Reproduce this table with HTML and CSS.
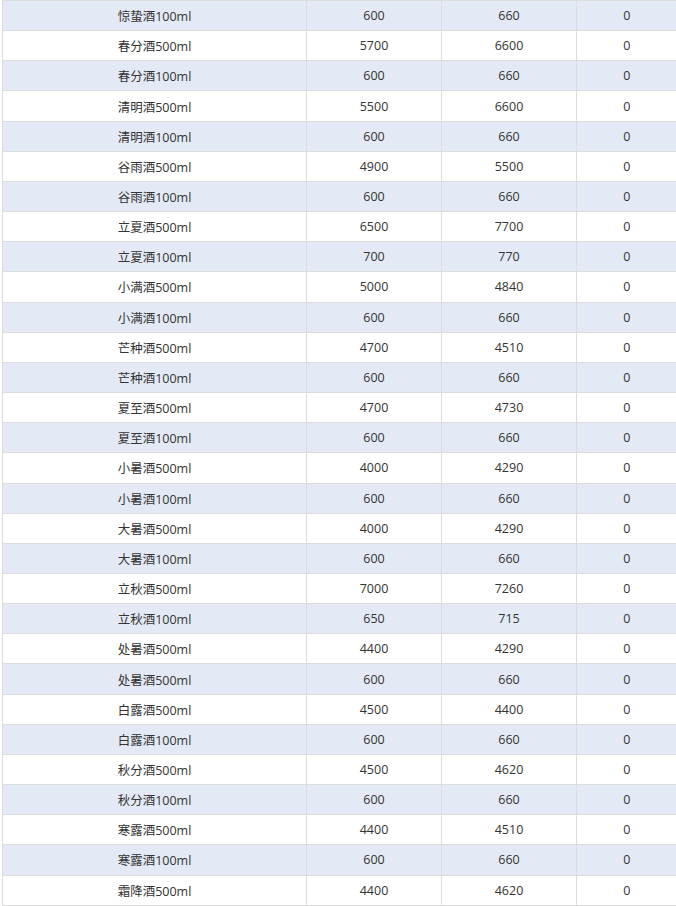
FILE: index.html
```html
<!DOCTYPE html>
<html lang="zh">
<head>
<meta charset="utf-8">
<link rel="stylesheet" href="styles.css">
</head>
<body>
<div class="wrap">
<table class="grid">
<colgroup><col class="c1"><col class="c2"><col class="c3"><col class="c4"></colgroup>
<tbody>
<tr><td>惊蛰酒100ml</td><td>600</td><td>660</td><td>0</td></tr>
<tr><td>春分酒500ml</td><td>5700</td><td>6600</td><td>0</td></tr>
<tr><td>春分酒100ml</td><td>600</td><td>660</td><td>0</td></tr>
<tr><td>清明酒500ml</td><td>5500</td><td>6600</td><td>0</td></tr>
<tr><td>清明酒100ml</td><td>600</td><td>660</td><td>0</td></tr>
<tr><td>谷雨酒500ml</td><td>4900</td><td>5500</td><td>0</td></tr>
<tr><td>谷雨酒100ml</td><td>600</td><td>660</td><td>0</td></tr>
<tr><td>立夏酒500ml</td><td>6500</td><td>7700</td><td>0</td></tr>
<tr><td>立夏酒100ml</td><td>700</td><td>770</td><td>0</td></tr>
<tr><td>小满酒500ml</td><td>5000</td><td>4840</td><td>0</td></tr>
<tr><td>小满酒100ml</td><td>600</td><td>660</td><td>0</td></tr>
<tr><td>芒种酒500ml</td><td>4700</td><td>4510</td><td>0</td></tr>
<tr><td>芒种酒100ml</td><td>600</td><td>660</td><td>0</td></tr>
<tr><td>夏至酒500ml</td><td>4700</td><td>4730</td><td>0</td></tr>
<tr><td>夏至酒100ml</td><td>600</td><td>660</td><td>0</td></tr>
<tr><td>小暑酒500ml</td><td>4000</td><td>4290</td><td>0</td></tr>
<tr><td>小暑酒100ml</td><td>600</td><td>660</td><td>0</td></tr>
<tr><td>大暑酒500ml</td><td>4000</td><td>4290</td><td>0</td></tr>
<tr><td>大暑酒100ml</td><td>600</td><td>660</td><td>0</td></tr>
<tr><td>立秋酒500ml</td><td>7000</td><td>7260</td><td>0</td></tr>
<tr><td>立秋酒100ml</td><td>650</td><td>715</td><td>0</td></tr>
<tr><td>处暑酒500ml</td><td>4400</td><td>4290</td><td>0</td></tr>
<tr><td>处暑酒500ml</td><td>600</td><td>660</td><td>0</td></tr>
<tr><td>白露酒500ml</td><td>4500</td><td>4400</td><td>0</td></tr>
<tr><td>白露酒100ml</td><td>600</td><td>660</td><td>0</td></tr>
<tr><td>秋分酒500ml</td><td>4500</td><td>4620</td><td>0</td></tr>
<tr><td>秋分酒100ml</td><td>600</td><td>660</td><td>0</td></tr>
<tr><td>寒露酒500ml</td><td>4400</td><td>4510</td><td>0</td></tr>
<tr><td>寒露酒100ml</td><td>600</td><td>660</td><td>0</td></tr>
<tr><td>霜降酒500ml</td><td>4400</td><td>4620</td><td>0</td></tr>
</tbody>
</table>
</div>
</body>
</html>
```
FILE: styles.css
```css
html, body {
  margin: 0;
  padding: 0;
  background: #fff;
  overflow: hidden;
}
.wrap {
  padding-left: 2px;
}
.grid {
  border-collapse: collapse;
  table-layout: fixed;
  width: 674px;
  font-family: "Open Sans", "Noto Sans CJK SC", sans-serif;
  font-size: 12.5px;
  color: #333;
}
.c1 { width: 304px; }
.c2 { width: 135px; }
.c3 { width: 135px; }
.c4 { width: 100px; }
.grid td {
  border: 1px solid #dcdcdc;
  height: 30.17px;
  padding: 0;
  text-align: center;
  vertical-align: middle;
  box-sizing: border-box;
}
.grid td:last-child {
  border-right: none;
}
.grid tr:nth-child(odd) td {
  background: #e4eaf5;
}
```
